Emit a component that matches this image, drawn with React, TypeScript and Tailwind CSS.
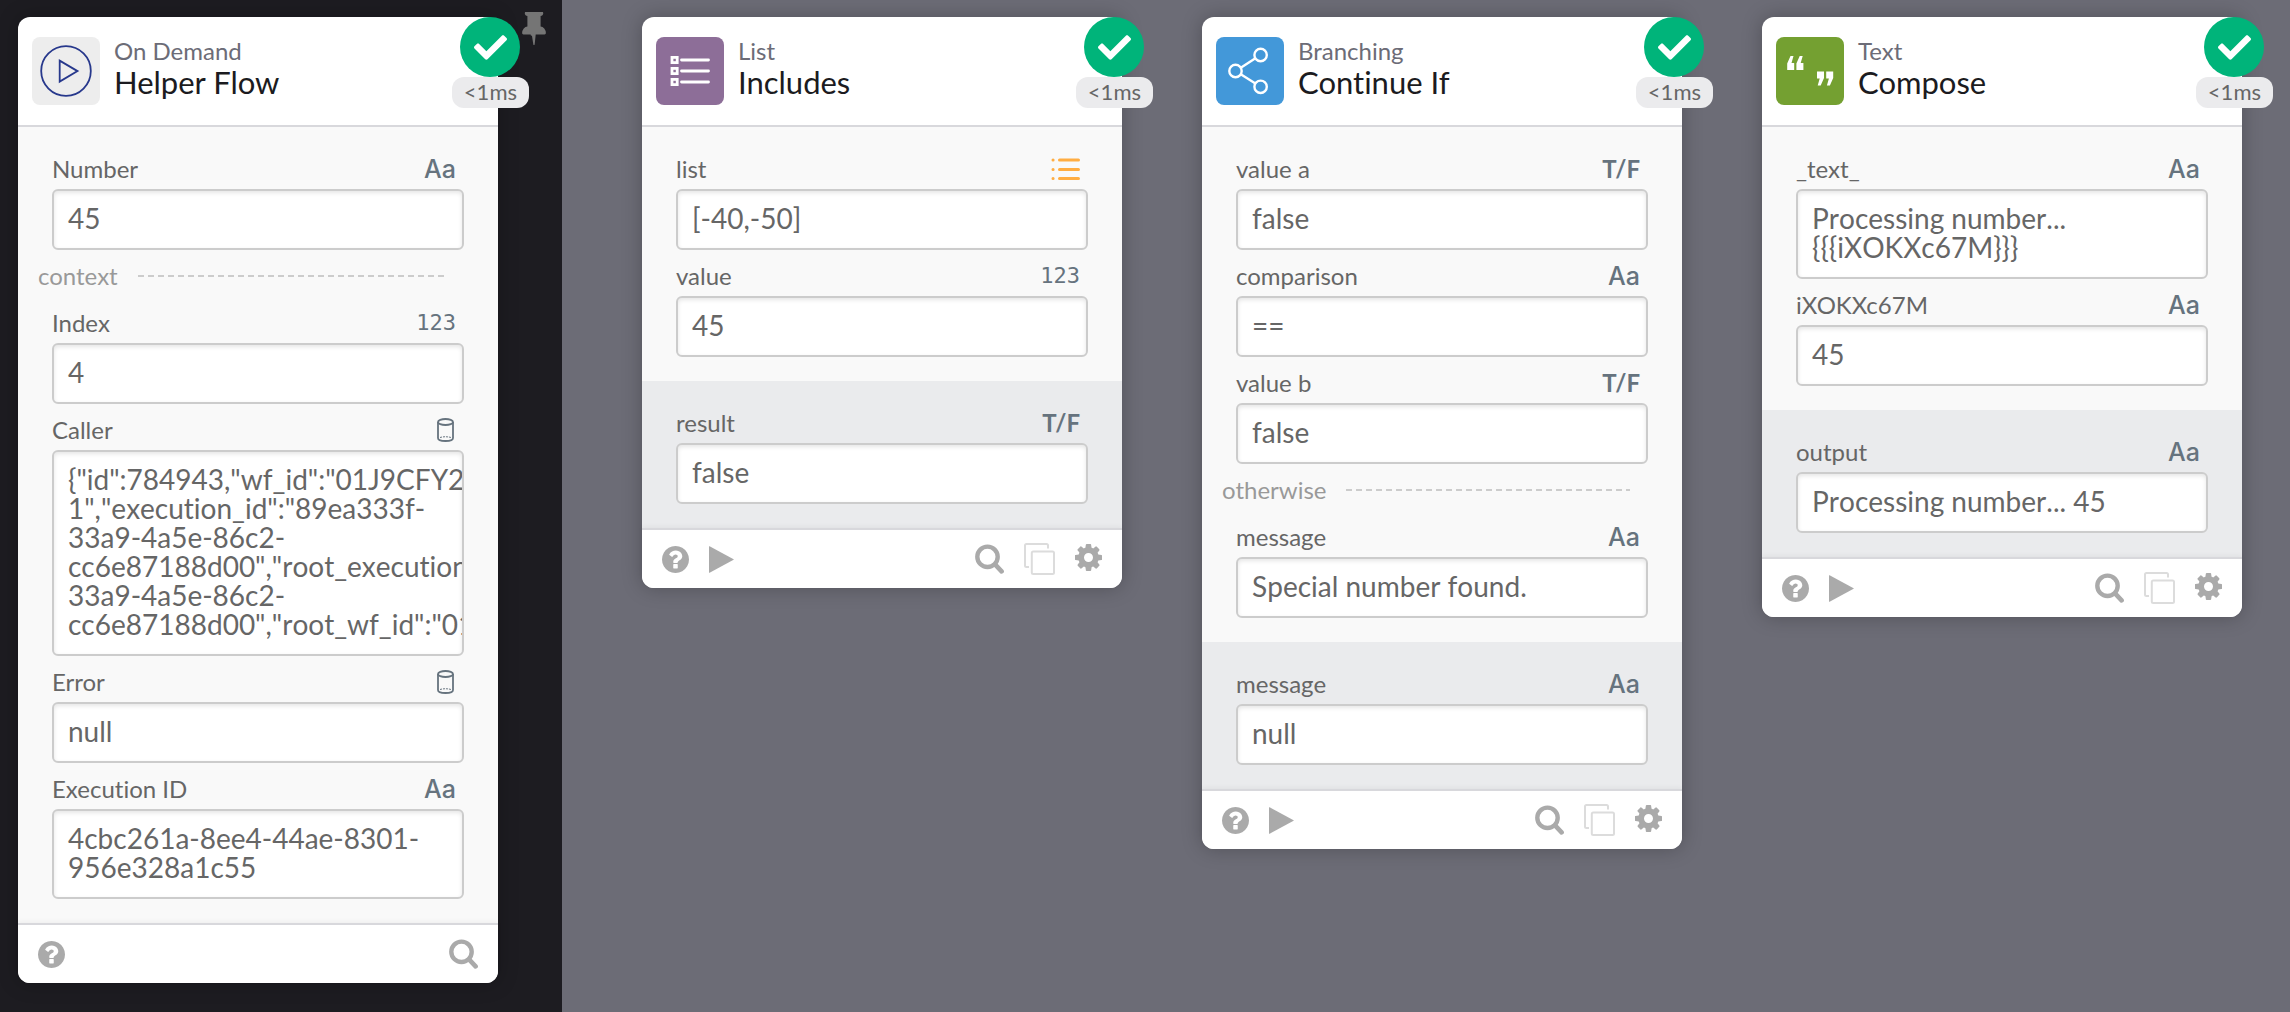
import { useId } from "react";
import type { ReactNode } from "react";
import { FaCheck } from "react-icons/fa";
import clsx from "clsx";

type FieldType = "text" | "number" | "boolean" | "object" | "list";

interface Field {
  name: string;
  type: FieldType;
  value: string;
}

interface Group {
  title?: string;
  fields: Field[];
}

interface FlowCard {
  app: string;
  method: string;
  icon: ReactNode;
  iconClass: string;
  groups: Group[];
  outputs?: Field[];
  isTrigger?: boolean;
}

function PlayCircleIcon() {
  return (
    <svg viewBox="0 0 68 68" className="size-full" fill="none" stroke="#27388c" strokeWidth="1.8">
      <circle cx="34" cy="34" r="24.8" />
      <path d="M27.7 23.6v21l17.8-10.5z" />
    </svg>
  );
}

function ListAppIcon() {
  return (
    <svg viewBox="0 0 68 68" className="size-full" fill="none" stroke="#fff" strokeWidth="2.8">
      {[23, 34, 45].map((y) => (
        <g key={y}>
          <rect x="16" y={y - 2.6} width="5.2" height="5.2" />
          <path d={`M25.5 ${y}h27`} strokeLinecap="round" />
        </g>
      ))}
    </svg>
  );
}

function BranchIcon() {
  return (
    <svg viewBox="0 0 68 68" className="size-full" fill="none" stroke="#fff" strokeWidth="2.4">
      <circle cx="44.6" cy="18" r="6.2" />
      <circle cx="19.5" cy="34" r="6.2" />
      <circle cx="44.6" cy="49.8" r="6.2" />
      <path d="M24.8 30.7 39.4 21.3M24.8 37.3l14.6 9.2" />
    </svg>
  );
}

function QuoteIcon() {
  return (
    <svg viewBox="0 0 68 68" className="size-full" fill="#fff">
      <path d="M18.2 33h-7v-6.5l3.3-7.5h3l-2 7h2.7zM27.4 33h-7v-6.5l3.3-7.5h3l-2 7h2.7z" />
      <path d="M41 34.5h7V41l-3.3 7.5h-3l2-7H41zM50.2 34.5h7V41l-3.3 7.5h-3l2-7h-2.7z" />
    </svg>
  );
}

function PinIcon() {
  return (
    <svg viewBox="0 0 1152 1600" className="h-[33px] w-6" fill="currentColor">
      <path d="M480 672v448q0 14-9 23t-23 9-23-9-9-23v-448q0-14 9-23t23-9 23 9 9 23zm672 352q0 26-19 45t-45 19h-429l-51 483q-2 12-10.5 20.5t-20.5 8.5h-1q-27 0-32-27l-76-485h-404q-26 0-45-19t-19-45q0-123 78.5-221.5t177.5-98.5v-512q-52 0-90-38t-38-90 38-90 90-38h640q52 0 90 38t38 90-38 90-90 38v512q99 0 177.5 98.5t78.5 221.5z" />
    </svg>
  );
}

function HelpIcon() {
  return (
    <svg viewBox="128 128 1536 1536" className="size-[27px]" fill="currentColor">
      <path d="M1024 1376v-192q0-14-9-23t-23-9h-192q-14 0-23 9t-9 23v192q0 14 9 23t23 9h192q14 0 23-9t9-23zm256-672q0-88-55.5-163t-138.5-116-170-41q-243 0-371 213-15 24 8 42l132 100q7 6 19 6 16 0 25-12 53-68 86-92 34-24 86-24 48 0 85.5 26t37.5 59q0 38-20 61t-68 45q-63 28-115.5 86.5t-52.5 125.5v36q0 14 9 23t23 9h192q14 0 23-9t9-23q0-19 21.5-49.5t54.5-49.5q32-18 49-28.5t46-35 44.5-48 28-60.5 12.5-81zm384 192q0 209-103 385.5t-279.5 279.5-385.5 103-385.5-103-279.5-279.5-103-385.5 103-385.5 279.5-279.5 385.5-103 385.5 103 279.5 279.5 103 385.5z" />
    </svg>
  );
}

function RunIcon() {
  return (
    <svg viewBox="0 0 25 27" className="h-[27px] w-[25px]" fill="currentColor">
      <path d="M0 0.6Q0 0 0.6 0.2L24.6 13.2Q25 13.5 24.6 13.8L0.6 26.8Q0 27 0 26.4z" />
    </svg>
  );
}

function SearchIcon() {
  return (
    <svg viewBox="0 0 29 30" className="h-[30px] w-[29px]" fill="none" stroke="currentColor">
      <circle cx="12.5" cy="12.8" r="10.2" strokeWidth="4.4" />
      <path d="m20 20.4 6.6 7" strokeWidth="4.6" strokeLinecap="round" />
    </svg>
  );
}

function CopyIcon() {
  return (
    <svg viewBox="0 0 31 32" className="h-8 w-[31px]" fill="none" stroke="#dcdcdc" strokeWidth="2">
      <rect x="7.8" y="8.4" width="22.2" height="22.6" rx="1.5" />
      <path d="M5 24H2.5Q1 24 1 22.5V2.5Q1 1 2.5 1H22.5Q24 1 24 2.5V5.5" />
    </svg>
  );
}

function GearIcon() {
  return (
    <svg viewBox="0 -128 1536 1536" className="size-[27px]" fill="currentColor">
      <path d="M1024 640q0-106-75-181t-181-75-181 75-75 181 75 181 181 75 181-75 75-181zm512-109v222q0 12-8 23t-20 13l-185 28q-19 54-39 91 35 50 107 138 10 12 10 25t-9 23q-27 37-99 108t-94 71q-12 0-26-9l-138-108q-44 23-91 38-16 136-29 186-7 28-36 28h-222q-14 0-24.5-8.5t-11.5-21.5l-28-184q-49-16-90-37l-141 107q-10 9-25 9-14 0-25-11-126-114-165-168-7-10-7-23 0-12 8-23 15-21 51-66.5t54-70.5q-27-50-41-99l-183-27q-13-2-21-12.5t-8-23.5v-222q0-12 8-23t19-13l186-28q14-46 39-92-40-57-107-138-10-12-10-24 0-10 9-23 26-36 98.5-107.5t94.5-71.5q13 0 26 10l138 107q44-23 91-38 16-136 29-186 7-28 36-28h222q14 0 24.5 8.5t11.5 21.5l28 184q49 16 90 37l142-107q9-9 24-9 13 0 25 10 129 119 165 170 7 8 7 22 0 12-8 23-15 21-51 66.5t-54 70.5q26 50 41 98l183 28q13 2 21 12.5t8 23.5z" />
    </svg>
  );
}

function TypeMark({ type }: { type: FieldType }) {
  switch (type) {
    case "text":
      return <span className="font-['Inter',sans-serif] text-[25px] leading-8 font-medium">Aa</span>;
    case "number":
      return <span className="font-['DejaVu_Sans_Mono',monospace] text-[22px] leading-8">123</span>;
    case "boolean":
      return <span className="text-2xl leading-8 font-bold">T/F</span>;
    case "object":
      return (
        <svg viewBox="0 0 17 24" className="mr-0.5 mb-1 h-6 w-[17px]" fill="none" stroke="currentColor" strokeWidth="1.8">
          <ellipse cx="8.5" cy="4" rx="7.5" ry="3" />
          <path d="M1 4v16c0 4 15 4 15 0V4" />
          <path d="M3 19.5q5.5-1.5 11 0" strokeWidth="1" strokeDasharray="2 1" />
        </svg>
      );
    case "list":
      return (
        <svg viewBox="0 0 29 23" className="mb-1 h-[23px] w-[29px]" fill="none" stroke="#ffad42" strokeWidth="3" strokeLinecap="round">
          <path d="M2 2h.1M8.5 2H27.5M2 11.5h.1M8.5 11.5H27.5M2 20.5h.1M8.5 20.5H27.5" />
        </svg>
      );
  }
}

function FieldRow({ field }: { field: Field }) {
  const id = useId();
  return (
    <div>
      <div className="flex h-[46px] items-end justify-between pr-2 pb-1 text-[#66737e]">
        <label htmlFor={id} className="text-2xl leading-8 text-[#666]">
          {field.name}
        </label>
        <TypeMark type={field.type} />
      </div>
      <textarea
        id={id}
        readOnly
        wrap="off"
        rows={field.value.split("\n").length}
        value={field.value}
        className="block w-full resize-none overflow-hidden rounded-md border-2 border-[#ccc] bg-white px-3.5 pt-[13px] pb-[15px] text-[28px] leading-[29px] whitespace-pre text-[#666] shadow-[inset_0_2px_4px_rgba(0,0,0,0.1)] outline-none [font-kerning:none]"
      />
    </div>
  );
}

function Divider({ title }: { title: string }) {
  return (
    <div className="-ml-3.5 flex h-[47px] items-center gap-5 pt-1 pr-[18px] text-2xl leading-8 text-[#999]">
      {title}
      <div className="h-0.5 flex-1 bg-[repeating-linear-gradient(90deg,#ccc_0_6px,transparent_6px_10px)]" />
    </div>
  );
}

function Status() {
  return (
    <div className="absolute top-0 -right-[31px] flex flex-col items-center">
      <div className="flex size-[60px] items-center justify-center rounded-full bg-[#00b47a] text-white">
        <FaCheck className="size-[33px]" />
      </div>
      <span className="rounded-xl bg-[#ebebed] px-3 pb-0.5 text-[22px] leading-[29px] text-[#666]">&lt;1ms</span>
    </div>
  );
}

function Card({ card }: { card: FlowCard }) {
  return (
    <article className="relative w-[480px] shrink-0 rounded-xl bg-white shadow-[0_0_20px_rgba(0,0,0,0.25)]">
      <header className="flex h-[110px] items-start gap-3.5 border-b-2 border-[#d8d8dc] px-3.5 pt-5">
        <div className={clsx("size-[68px] shrink-0 rounded-lg", card.iconClass)}>{card.icon}</div>
        <div>
          <p className="text-2xl leading-7 text-[#6c6c77]">{card.app}</p>
          <h2 className="text-[31px] leading-[34px] text-[#1b1b20]">{card.method}</h2>
        </div>
      </header>
      <Status />

      <section className="bg-[#f9f9f9] px-[34px] pt-4 pb-6">
        {card.groups.map((group, i) => (
          <div key={i}>
            {group.title && <Divider title={group.title} />}
            {group.fields.map((field) => (
              <FieldRow key={field.name} field={field} />
            ))}
          </div>
        ))}
      </section>

      {card.outputs && (
        <section className="bg-[#eaebed] px-[34px] pt-4 pb-6">
          {card.outputs.map((field) => (
            <FieldRow key={field.name} field={field} />
          ))}
        </section>
      )}

      <footer className="flex h-[60px] items-center gap-5 rounded-b-xl border-t-2 border-[#d8d8dc] bg-white px-5 text-[#aaa] shadow-[0_-2px_4px_rgba(0,0,0,0.04)]">
        <button type="button" aria-label="Help">
          <HelpIcon />
        </button>
        {!card.isTrigger && (
          <button type="button" aria-label="Run">
            <RunIcon />
          </button>
        )}
        <button type="button" aria-label="Inspect" className="ml-auto">
          <SearchIcon />
        </button>
        {!card.isTrigger && (
          <>
            <button type="button" aria-label="Duplicate">
              <CopyIcon />
            </button>
            <button type="button" aria-label="Settings" className="pb-1">
              <GearIcon />
            </button>
          </>
        )}
      </footer>
    </article>
  );
}

const callerValue = [
  '{"id":784943,"wf_id":"01J9CFY21',
  '1","execution_id":"89ea333f-',
  "33a9-4a5e-86c2-",
  'cc6e87188d00","root_execution_id',
  "33a9-4a5e-86c2-",
  'cc6e87188d00","root_wf_id":"01J9',
].join("\n");

const trigger: FlowCard = {
  app: "On Demand",
  method: "Helper Flow",
  icon: <PlayCircleIcon />,
  iconClass: "bg-[#ededed]",
  isTrigger: true,
  groups: [
    { fields: [{ name: "Number", type: "text", value: "45" }] },
    {
      title: "context",
      fields: [
        { name: "Index", type: "number", value: "4" },
        { name: "Caller", type: "object", value: callerValue },
        { name: "Error", type: "object", value: "null" },
        { name: "Execution ID", type: "text", value: "4cbc261a-8ee4-44ae-8301-\n956e328a1c55" },
      ],
    },
  ],
};

const cards: FlowCard[] = [
  {
    app: "List",
    method: "Includes",
    icon: <ListAppIcon />,
    iconClass: "bg-[#8d6e98]",
    groups: [
      {
        fields: [
          { name: "list", type: "list", value: "[-40,-50]" },
          { name: "value", type: "number", value: "45" },
        ],
      },
    ],
    outputs: [{ name: "result", type: "boolean", value: "false" }],
  },
  {
    app: "Branching",
    method: "Continue If",
    icon: <BranchIcon />,
    iconClass: "bg-[#4398d9]",
    groups: [
      {
        fields: [
          { name: "value a", type: "boolean", value: "false" },
          { name: "comparison", type: "text", value: "==" },
          { name: "value b", type: "boolean", value: "false" },
        ],
      },
      {
        title: "otherwise",
        fields: [{ name: "message", type: "text", value: "Special number found." }],
      },
    ],
    outputs: [{ name: "message", type: "text", value: "null" }],
  },
  {
    app: "Text",
    method: "Compose",
    icon: <QuoteIcon />,
    iconClass: "bg-[#74a031]",
    groups: [
      {
        fields: [
          { name: "_text_", type: "text", value: "Processing number...\n{{{iXOKXc67M}}}" },
          { name: "iXOKXc67M", type: "text", value: "45" },
        ],
      },
    ],
    outputs: [{ name: "output", type: "text", value: "Processing number... 45" }],
  },
];

export default function App() {
  return (
    <div className="flex min-h-screen bg-[#6c6c76] font-['Lato',sans-serif] [font-variant-ligatures:none]">
      <aside className="relative shrink-0 bg-[#1d1c21] pt-[17px] pr-16 pb-7 pl-[18px]">
        <Card card={trigger} />
        <button type="button" aria-label="Pin" className="absolute top-3 right-4 text-[#757575]">
          <PinIcon />
        </button>
      </aside>
      <main className="flex flex-1 items-start gap-20 pt-[17px] pr-12 pl-20">
        {cards.map((card) => (
          <Card key={card.method} card={card} />
        ))}
      </main>
    </div>
  );
}
